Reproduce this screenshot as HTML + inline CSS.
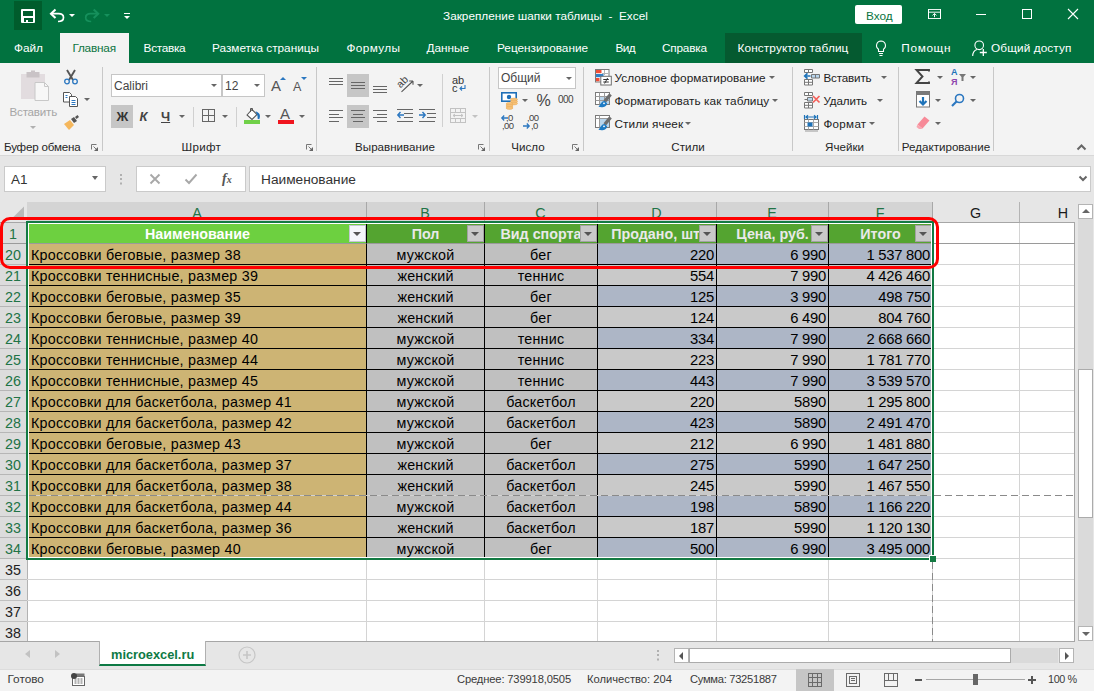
<!DOCTYPE html>
<html lang="ru"><head><meta charset="utf-8"><title>Excel</title><style>
*{box-sizing:border-box;margin:0;padding:0}
html,body{width:1094px;height:691px;overflow:hidden;background:#e6e6e6}
body{font-family:"Liberation Sans",sans-serif;font-size:11.6px;color:#262626;position:relative}
.a{position:absolute}
.t{position:absolute;white-space:nowrap;line-height:14px}
.w{color:#fff}
svg{position:absolute;overflow:visible}
#title{left:0;top:0;width:1094px;height:32px;background:#01723f}
#tabs{left:0;top:32px;width:1094px;height:31px;background:#01723f}
#ribbon{left:0;top:63px;width:1094px;height:93px;background:#f3f3f3;border-bottom:1px solid #d8d8d8}
.sep{position:absolute;width:1px;background:#c8c8c8;top:67px;height:84px}
.gl{position:absolute;white-space:nowrap;line-height:14px;top:140px;color:#262626;text-align:center}
.dd{position:absolute;width:0;height:0;border-left:3px solid transparent;border-right:3px solid transparent;border-top:3px solid #666}
</style></head><body>
<div id="title" class="a"><div class="a" style="left:14px;top:1px;width:28px;height:29px;background:#005c2c"></div><div class="a" style="left:21px;top:9px;width:14px;height:14px;background:#fff;border-radius:1px"></div><div class="a" style="left:23px;top:11px;width:10px;height:4.500px;background:#005c2c"></div><div class="a" style="left:23.500px;top:17.500px;width:9px;height:4px;background:#005c2c"></div><div class="a" style="left:26px;top:20px;width:2px;height:1.500px;background:#fff"></div><svg style="left:49px;top:8px" width="16" height="16" viewBox="0 0 16 16" fill="none" stroke="#fff" stroke-width="1.700"><path d="M6.500 1.500L2 5.700l4.500 4.300" stroke-width="2.100"/><path d="M2 5.700h7.500c3.500 0 5 1.800 5 3.800 0 2.500-2 4-5.500 4"/></svg><div class="dd" style="left:69px;top:14px;border-top-color:#fff"></div><svg style="left:85px;top:8px" width="16" height="16" viewBox="0 0 16 16" fill="none" stroke="#16905c" stroke-width="1.700"><path d="M8.700 1.500l4.500 4.200-4.500 4.300" stroke-width="2.100"/><path d="M13.200 5.700H5.700c-3.500 0-5 1.800-5 3.800 0 2.500 2 4 5.500 4"/></svg><div class="dd" style="left:104px;top:14px;border-top-color:#16905c"></div><div class="a" style="left:123.500px;top:13px;width:6px;height:1px;background:#fff"></div><div class="dd" style="left:123.500px;top:15.500px;border-top-color:#fff"></div><div class="t w" style="left:443px;top:9px;font-size:11.8px">Закрепление шапки таблицы&nbsp; -&nbsp; Excel</div><div class="a" style="left:855px;top:5px;width:47px;height:19px;background:#fff;border-radius:2px"></div><div class="t" style="left:866px;top:8.500px;color:#0b7541;font-size:11.8px">Вход</div><svg style="left:928px;top:9px" width="13" height="10" viewBox="0 0 13 11" preserveAspectRatio="none" fill="none" stroke="#fff" stroke-width="1"><rect x="0.5" y="0.5" width="12" height="10"/><path d="M0.5 3.5h12"/><path d="M6.500 9V5M4.500 7l2-2 2 2"/></svg><div class="a" style="left:976px;top:14px;width:10px;height:1px;background:#fff"></div><div class="a" style="left:1022px;top:9px;width:10px;height:10px;border:1px solid #fff"></div><svg style="left:1068px;top:9px" width="10" height="10" viewBox="0 0 10 10" stroke="#fff" stroke-width="1.1"><path d="M0 0l10 10M10 0L0 10"/></svg></div>
<div id="tabs" class="a"><div class="a" style="left:60px;top:1px;width:69px;height:30px;background:#f3f3f3"></div><div class="a" style="left:725px;top:1px;width:137px;height:30px;background:#055a30"></div><div class="t" style="left:14px;top:8.600px;color:#fff;font-size:11.8px">Файл</div><div class="t" style="left:72.4px;top:8.600px;color:#0b7541;letter-spacing:-0.2px;font-size:11.8px">Главная</div><div class="t" style="left:143.6px;top:8.600px;color:#fff;letter-spacing:-0.3px;font-size:11.8px">Вставка</div><div class="t" style="left:212px;top:8.600px;color:#fff;font-size:11.8px">Разметка страницы</div><div class="t" style="left:346.5px;top:8.600px;color:#fff;letter-spacing:0.35px;font-size:11.8px">Формулы</div><div class="t" style="left:426.5px;top:8.600px;color:#fff;font-size:11.8px">Данные</div><div class="t" style="left:497px;top:8.600px;color:#fff;font-size:11.8px">Рецензирование</div><div class="t" style="left:615.4px;top:8.600px;color:#fff;letter-spacing:-0.5px;font-size:11.8px">Вид</div><div class="t" style="left:662px;top:8.600px;color:#fff;letter-spacing:-0.2px;font-size:11.8px">Справка</div><div class="t" style="left:737.5px;top:8.600px;color:#fff;letter-spacing:0.12px;font-size:11.8px">Конструктор таблиц</div><div class="t" style="left:901.3px;top:8.600px;color:#fff;letter-spacing:0.65px;font-size:11.8px">Помощн</div><div class="t" style="left:991px;top:8.600px;color:#fff;letter-spacing:0.1px;font-size:11.8px">Общий доступ</div><svg style="left:875px;top:8px" width="12" height="16" viewBox="0 0 12 16" fill="none" stroke="#fff" stroke-width="1.1"><path d="M6 1a4.500 4.500 0 0 0-2.500 8.200V11.500h5V9.200A4.500 4.500 0 0 0 6 1z"/><path d="M4 13.500h4M4.500 15.500h3"/></svg><svg style="left:971px;top:8px" width="17" height="17" viewBox="0 0 17 17" fill="none" stroke="#fff" stroke-width="1.100"><circle cx="8.200" cy="5.300" r="4.300"/><path d="M1.700 16c0-3.500 1.800-5.800 4.300-6.600"/><path d="M12.300 9v7M8.800 12.500h7" stroke-width="1.300"/></svg></div>
<div id="ribbon" class="a"></div>
<div class="sep" style="left:102px"></div><div class="sep" style="left:316px"></div><div class="sep" style="left:489px"></div><div class="sep" style="left:583px"></div><div class="sep" style="left:792px"></div><div class="sep" style="left:898px"></div><div class="sep" style="left:993px"></div><svg style="left:20px;top:70px" width="30" height="32" viewBox="0 0 30 32"><rect x="1" y="4" width="24" height="25" fill="#e2dcdf"/><rect x="6.500" y="2" width="13" height="5.500" fill="#c9c3c6"/><rect x="11" y="0.500" width="4" height="3" fill="#c9c3c6"/><path d="M15 12.500h9.500l4 4V30.500H15z" fill="#f7f7f7" stroke="#c8c8c8"/><path d="M24.500 12.500v4h4" fill="none" stroke="#c8c8c8"/></svg><div class="t" style="left:9.5px;top:105px;color:#a6a6a6;letter-spacing:-0.2px">Вставить</div><div class="dd" style="left:30px;top:125.5px;border-top-color:#b0b0b0"></div><svg style="left:63px;top:68px" width="16" height="17" viewBox="0 0 16 17" fill="none"><path d="M4 2l6 10M12 2L6 12" stroke="#555" stroke-width="1.900"/><circle cx="4" cy="13.500" r="2.300" stroke="#2b77c0" stroke-width="1.300"/><circle cx="12" cy="13.500" r="2.300" stroke="#2b77c0" stroke-width="1.300"/></svg><svg style="left:63px;top:92px" width="16" height="15" viewBox="0 0 16 15" fill="#fff" stroke="#555" stroke-width="1"><path d="M0.500 0.500h6l2 2v7.500h-8z"/><path d="M6.500 4.500h6l2 2v8h-8z"/><path d="M8.500 8.500h4M8.500 10.500h4M8.500 12.500h4" stroke="#2b77c0"/><path d="M2.500 3.500h2M2.500 5.500h2" stroke="#2b77c0"/></svg><div class="dd" style="left:84px;top:98.3px;border-top-color:#666"></div><svg style="left:63px;top:114px" width="17" height="17" viewBox="0 0 17 17"><path d="M1 10l6-4 4 5-5 5z" fill="#f5b75c"/><path d="M8 5l3-2 3 4-3 2z" fill="#555"/><path d="M12 3l2.500-2 1.500 2-2.500 2z" fill="#555"/></svg><div class="t" style="left:4px;top:140px;color:#262626;letter-spacing:-0.2px">Буфер обмена</div><svg style="left:91px;top:144px" width="7" height="7" viewBox="0 0 7 7" fill="none" stroke="#777" stroke-width="1"><path d="M0.500 5.500V0.500H5.500"/><path d="M2.500 2.500L5.500 5.500"/><path d="M7 3v4H3z" fill="#666" stroke="none"/></svg><div class="a" style="left:111px;top:74px;width:111px;height:23px;background:#fff;border:1px solid #c6c6c6"></div><div class="a" style="left:222px;top:74px;width:43px;height:23px;background:#fff;border:1px solid #c6c6c6"></div><div class="t" style="left:114px;top:78.5px;color:#444;font-size:12px">Calibri</div><div class="t" style="left:225px;top:78.5px;color:#444;font-size:12px">12</div><div class="dd" style="left:211px;top:84.3px;border-top-color:#666"></div><div class="dd" style="left:254px;top:84.3px;border-top-color:#666"></div><div class="t" style="left:271px;top:79px;font-size:15px;color:#555">A</div><div class="dd" style="left:280px;top:77px;border-top:none;border-bottom:3px solid #2b77c0"></div><div class="t" style="left:293px;top:80px;font-size:12.500px;color:#555">A</div><div class="dd" style="left:301px;top:77px;border-top-color:#2b77c0"></div><div class="a" style="left:111px;top:105px;width:22px;height:23px;background:#c6c6c6"></div><div class="t" style="left:116.5px;top:109.5px;font-weight:bold;font-size:13px;color:#333">Ж</div><div class="t" style="left:139.5px;top:109.5px;font-style:italic;font-weight:bold;font-size:13px;color:#444">К</div><div class="t" style="left:161px;top:109.5px;font-size:13px;color:#444;text-decoration:underline;font-weight:bold">Ч</div><div class="dd" style="left:179px;top:115.3px;border-top-color:#666"></div><div class="a" style="left:193px;top:107px;width:1px;height:20px;background:#d0d0d0"></div><svg style="left:202px;top:109px" width="13" height="13" viewBox="0 0 13 13" fill="none" stroke="#666" stroke-width="1"><rect x="0.500" y="0.500" width="12" height="12"/><path d="M6.500 0.500v12M0.500 6.500h12"/></svg><div class="dd" style="left:222px;top:115.3px;border-top-color:#666"></div><div class="a" style="left:236px;top:107px;width:1px;height:20px;background:#d0d0d0"></div><svg style="left:244px;top:107px" width="17" height="18" viewBox="0 0 17 18"><path d="M3 8l5-5.500 5 5-5 5z" fill="#fff" stroke="#555" stroke-width="1.100"/><path d="M6.500 5V1.500h2V4" stroke="#555" stroke-width="1" fill="none"/><path d="M11.500 4.600c3.800 0.600 5.600 3.800 3.800 7.600l-1.700-0.500c0.300-2.600-0.500-4.800-2.100-7.100z" fill="#1e6fb8"/><rect x="0" y="13" width="16" height="4" fill="#70d048"/></svg><div class="dd" style="left:265px;top:115.3px;border-top-color:#666"></div><svg style="left:278px;top:107px" width="17" height="18" viewBox="0 0 17 18"><rect x="0" y="13" width="16" height="4" fill="#f0141e"/></svg><div class="t" style="left:280px;top:106.5px;font-size:15px;color:#555">A</div><div class="dd" style="left:299px;top:115.3px;border-top-color:#666"></div><div class="gl" style="left:180.300px;width:42px;letter-spacing:0.3px">Шрифт</div><svg style="left:306px;top:144px" width="7" height="7" viewBox="0 0 7 7" fill="none" stroke="#777" stroke-width="1"><path d="M0.500 5.500V0.500H5.500"/><path d="M2.500 2.500L5.500 5.500"/><path d="M7 3v4H3z" fill="#666" stroke="none"/></svg><div class="a" style="left:329px;top:78px;width:14px;height:1px;background:#666"></div><div class="a" style="left:329px;top:81px;width:14px;height:1px;background:#666"></div><div class="a" style="left:329px;top:84px;width:14px;height:1px;background:#666"></div><div class="a" style="left:347px;top:74px;width:22px;height:23px;background:#c6c6c6"></div><div class="a" style="left:351px;top:82px;width:14px;height:1px;background:#666"></div><div class="a" style="left:351px;top:85px;width:14px;height:1px;background:#666"></div><div class="a" style="left:351px;top:88px;width:14px;height:1px;background:#666"></div><div class="a" style="left:373px;top:86px;width:14px;height:1px;background:#666"></div><div class="a" style="left:373px;top:89px;width:14px;height:1px;background:#666"></div><div class="a" style="left:373px;top:92px;width:14px;height:1px;background:#666"></div><svg style="left:396px;top:76px" width="18" height="17" viewBox="0 0 18 17"><text x="4.500" y="12.500" font-size="10.500" fill="#444" transform="rotate(-45 4.500 12.500)" font-family="Liberation Sans">ab</text><path d="M5.500 15.800L17 5M17 5h-3.800M17 5v3.800" stroke="#555" fill="none" stroke-width="1.100"/></svg><div class="dd" style="left:416.5px;top:83.8px;border-top-color:#666"></div><div class="a" style="left:442px;top:74px;width:1px;height:53px;background:#d0d0d0"></div><div class="t" style="left:452px;top:75.500px;font-size:11px;line-height:8.500px;color:#333">ab<br>c</div><svg style="left:459px;top:85px" width="7" height="6" viewBox="0 0 7 6" fill="none" stroke="#2b77c0" stroke-width="1.100"><path d="M6 0v3.500H1M3 1.500l-2 2 2 2"/></svg><div class="a" style="left:329px;top:110px;width:14px;height:1px;background:#666"></div><div class="a" style="left:329px;top:113.67px;width:10px;height:1px;background:#666"></div><div class="a" style="left:329px;top:117.34px;width:14px;height:1px;background:#666"></div><div class="a" style="left:329px;top:121.01px;width:10px;height:1px;background:#666"></div><div class="a" style="left:347px;top:105px;width:22px;height:23px;background:#c6c6c6"></div><div class="a" style="left:351px;top:110px;width:14px;height:1px;background:#666"></div><div class="a" style="left:353px;top:113.67px;width:10px;height:1px;background:#666"></div><div class="a" style="left:351px;top:117.34px;width:14px;height:1px;background:#666"></div><div class="a" style="left:353px;top:121.01px;width:10px;height:1px;background:#666"></div><div class="a" style="left:373px;top:110px;width:14px;height:1px;background:#666"></div><div class="a" style="left:377px;top:113.67px;width:10px;height:1px;background:#666"></div><div class="a" style="left:373px;top:117.34px;width:14px;height:1px;background:#666"></div><div class="a" style="left:377px;top:121.01px;width:10px;height:1px;background:#666"></div><div class="a" style="left:397px;top:109px;width:16px;height:1px;background:#666"></div><div class="a" style="left:404px;top:113px;width:9px;height:1px;background:#666"></div><div class="a" style="left:404px;top:117px;width:9px;height:1px;background:#666"></div><div class="a" style="left:397px;top:121px;width:16px;height:1px;background:#666"></div><svg style="left:397px;top:111px" width="7" height="8" viewBox="0 0 7 8" fill="none" stroke="#2b77c0" stroke-width="1.400"><path d="M7 4H1M3.500 1L0.800 4l2.700 3"/></svg><div class="a" style="left:419px;top:109px;width:16px;height:1px;background:#666"></div><div class="a" style="left:427px;top:113px;width:9px;height:1px;background:#666"></div><div class="a" style="left:427px;top:117px;width:9px;height:1px;background:#666"></div><div class="a" style="left:419px;top:121px;width:16px;height:1px;background:#666"></div><svg style="left:419px;top:111px" width="7" height="8" viewBox="0 0 7 8" fill="none" stroke="#2b77c0" stroke-width="1.400"><path d="M0 4h6M3.500 1l2.700 3-2.700 3"/></svg><svg style="left:450px;top:108px" width="16" height="15" viewBox="0 0 16 15" fill="none" stroke="#c2c2c2" stroke-width="1"><rect x="0.500" y="0.500" width="15" height="14"/><path d="M0.500 4.500h15M0.500 10.500h15M5.500 0.500v4M10.500 0.500v4M5.500 10.500v4M10.500 10.500v4M3 7.500h10M5 6L3 7.500 5 9M11 6l2 1.500L11 9"/></svg><div class="dd" style="left:471.5px;top:115.3px;border-top-color:#c2c2c2"></div><div class="gl" style="left:355px;width:80px">Выравнивание</div><svg style="left:478px;top:144px" width="7" height="7" viewBox="0 0 7 7" fill="none" stroke="#777" stroke-width="1"><path d="M0.500 5.500V0.500H5.500"/><path d="M2.500 2.500L5.500 5.500"/><path d="M7 3v4H3z" fill="#666" stroke="none"/></svg><div class="a" style="left:498px;top:67px;width:78px;height:22px;background:#fff;border:1px solid #c6c6c6"></div><div class="t" style="left:501px;top:71px;color:#444;font-size:12px">Общий</div><div class="dd" style="left:565.5px;top:76.8px;border-top-color:#666"></div><svg style="left:501px;top:92px" width="17" height="17" viewBox="0 0 17 17"><rect x="0.800" y="0.800" width="14.400" height="8.400" fill="#fff" stroke="#1e6fb8" stroke-width="1.600"/><circle cx="8" cy="5" r="2.200" fill="#1e6fb8"/><rect x="6" y="10" width="6" height="6" fill="#f3f3f3"/><g fill="#f6c27a" stroke="#e9a64e" stroke-width="0.500"><ellipse cx="13" cy="7.500" rx="3.500" ry="1.400"/><ellipse cx="13" cy="9.500" rx="3.500" ry="1.400"/><ellipse cx="13" cy="11.500" rx="3.500" ry="1.400"/><ellipse cx="8.500" cy="12" rx="3.500" ry="1.400"/><ellipse cx="8.500" cy="14" rx="3.500" ry="1.400"/><ellipse cx="8.500" cy="16" rx="3.500" ry="1.400"/></g></svg><div class="dd" style="left:522px;top:98.8px;border-top-color:#666"></div><div class="t" style="left:536.5px;top:93.5px;font-size:16px;color:#444">%</div><div class="t" style="left:558px;top:93px;font-size:10px;color:#444;letter-spacing:-0.6px">000</div><div class="t" style="left:506px;top:114px;font-size:9.500px;line-height:8px;color:#444;letter-spacing:-0.6px">,0<br><span style="margin-left:-4px">,00</span></div><svg style="left:501px;top:115px" width="7" height="6" viewBox="0 0 7 6" fill="none" stroke="#2b77c0" stroke-width="1.300"><path d="M7 3H1M3.200 0.500L0.800 3l2.400 2.500"/></svg><div class="t" style="left:527px;top:114px;font-size:9.500px;line-height:8px;color:#444;letter-spacing:-0.6px">,00<br><span style="margin-left:4px">,0</span></div><svg style="left:523px;top:123px" width="7" height="6" viewBox="0 0 7 6" fill="none" stroke="#2b77c0" stroke-width="1.300"><path d="M0 3h6M3.800 0.500L6.200 3 3.800 5.500"/></svg><div class="gl" style="left:507px;width:42px">Число</div><svg style="left:572px;top:144px" width="7" height="7" viewBox="0 0 7 7" fill="none" stroke="#777" stroke-width="1"><path d="M0.500 5.500V0.500H5.500"/><path d="M2.500 2.500L5.500 5.500"/><path d="M7 3v4H3z" fill="#666" stroke="none"/></svg><svg style="left:595px;top:69px" width="17" height="17" viewBox="0 0 17 17"><rect x="0.500" y="0.500" width="13.500" height="12.500" fill="#fff" stroke="#7a7a7a"/><path d="M9.500 1v5M7 4.500h6.500" stroke="#b4b4b4" fill="none"/><rect x="1" y="1" width="5.500" height="3.200" fill="#f04e37"/><rect x="1" y="5" width="7.500" height="3.200" fill="#2f7fc6"/><rect x="1" y="9" width="3.500" height="3.200" fill="#f04e37"/><rect x="5.800" y="7.300" width="10.500" height="8.700" fill="#fff" stroke="#6e6e6e"/><path d="M8.300 10.500h5.500M8.300 13h5.500M12.600 9L9.600 14.500" stroke="#333" fill="none"/></svg><div class="t" style="left:614.5px;top:71px;color:#222;letter-spacing:0.05px;font-size:11.800px">Условное форматирование</div><div class="dd" style="left:768.5px;top:76.3px;border-top-color:#666"></div><svg style="left:595px;top:92px" width="17" height="17" viewBox="0 0 17 17"><rect x="0.500" y="0.500" width="14" height="12" fill="#fff" stroke="#7a7a7a"/><rect x="5" y="5" width="9" height="7" fill="#b9d5ec"/><path d="M0.500 4.500h14M0.500 8.500h14M4.500 0.500v12M9.500 0.500v12" stroke="#9a9a9a" fill="none"/><path d="M14.300 1.300L16.800 3.500 11 10.500 8.500 8.300z" fill="#6e6e6e"/><path d="M9.800 9c-3-0.500-4 3-6.300 5.800 3.500 1 8.500 0.500 8.500-3.500z" fill="#1e7bc4"/><circle cx="9" cy="11.300" r="0.900" fill="#fff"/></svg><div class="t" style="left:614.5px;top:93.5px;color:#222;letter-spacing:0.05px;font-size:11.800px">Форматировать как таблицу</div><div class="dd" style="left:772px;top:98.8px;border-top-color:#666"></div><svg style="left:595px;top:115px" width="17" height="17" viewBox="0 0 17 17"><rect x="0.500" y="0.500" width="14" height="12" fill="#fff" stroke="#7a7a7a"/><rect x="5" y="4" width="9" height="8" fill="#b9d5ec"/><path d="M0.500 3.500h14M4.500 0.500v12" stroke="#9a9a9a" fill="none"/><path d="M14.300 1.300L16.800 3.500 11 10.500 8.500 8.300z" fill="#6e6e6e"/><path d="M9.800 9c-3-0.500-4 3-6.300 5.800 3.500 1 8.500 0.500 8.500-3.500z" fill="#1e7bc4"/><circle cx="9" cy="11.300" r="0.900" fill="#fff"/></svg><div class="t" style="left:614.5px;top:116.5px;color:#222;letter-spacing:0.05px;font-size:11.800px">Стили ячеек</div><div class="dd" style="left:684.5px;top:121.8px;border-top-color:#666"></div><div class="gl" style="left:668px;width:40px">Стили</div><svg style="left:803px;top:68px" width="18" height="18" viewBox="0 0 18 18" fill="none"><path d="M1.500 1.500h8v3h-8zM5.500 1.500v3" stroke="#777" fill="#fff"/><path d="M8.500 6.500h8v3.500h-8z" stroke="#777" fill="#b9d5ec"/><path d="M12.500 6.500v3.500" stroke="#777"/><path d="M1.500 11.500h8v5.500h-8zM5.500 11.500v5.500M1.500 14.300h8" stroke="#777" fill="#fff"/><path d="M7.500 8H2M4.500 5.300L1.700 8l2.800 2.700" stroke="#1e73b9" stroke-width="1.700"/></svg><div class="t" style="left:823.5px;top:71px;color:#222;letter-spacing:-0.15px">Вставить</div><div class="dd" style="left:880.5px;top:76.3px;border-top-color:#666"></div><svg style="left:803px;top:91px" width="18" height="18" viewBox="0 0 18 18" fill="none"><path d="M1.500 1.500h8v3h-8zM5.500 1.500v3" stroke="#777" fill="#fff"/><path d="M4.500 6.500h5v3.500h-5z" stroke="#777" fill="#b9d5ec"/><path d="M1.500 8.500h3" stroke="#777"/><path d="M1.500 11.500h8v5.500h-8zM5.500 11.500v5.500M1.500 14.300h8" stroke="#777" fill="#fff"/><path d="M10 5l6.500 6.500M16.500 5L10 11.500" stroke="#f4605a" stroke-width="1.700"/></svg><div class="t" style="left:823.5px;top:93.5px;color:#222;letter-spacing:-0.1px">Удалить</div><div class="dd" style="left:876.5px;top:98.8px;border-top-color:#666"></div><svg style="left:803px;top:114px" width="18" height="18" viewBox="0 0 18 18" fill="none"><path d="M1.500 1v4M14.500 1v4M3 3h10M5 1.300L3 3l2 1.700M11 1.300l2 1.700-2 1.700" stroke="#1e73b9" stroke-width="1.200"/><rect x="1.500" y="5.500" width="14" height="10" fill="#fff" stroke="#777"/><path d="M1.500 8.500h14M1.500 12.500h14M5.500 5.500v10M10.500 5.500v10" stroke="#aaa"/><rect x="4.500" y="8.500" width="5" height="4" fill="#1e73b9"/><path d="M2 17h13" stroke="#999"/></svg><div class="t" style="left:823.5px;top:116.5px;color:#222;letter-spacing:0.3px">Формат</div><div class="dd" style="left:868.5px;top:121.8px;border-top-color:#666"></div><div class="gl" style="left:822px;width:45px">Ячейки</div><svg style="left:915px;top:69px" width="15" height="15" viewBox="0 0 15 15" fill="none" stroke="#444" stroke-width="1.900"><path d="M14 2.500V1H1.500l6 6.500-6 6.500H14V12.500"/></svg><div class="dd" style="left:936.5px;top:76.3px;border-top-color:#666"></div><div class="t" style="left:951px;top:68px;font-size:9px;line-height:9.500px;font-weight:bold;color:#1e73b9">A<br><span style="color:#8e44ad">Я</span></div><svg style="left:959px;top:74px" width="7" height="7" viewBox="0 0 7 7"><path d="M0 0h7L4.500 3v4H2.500V3z" fill="#777"/></svg><div class="dd" style="left:969.5px;top:76.3px;border-top-color:#666"></div><svg style="left:916px;top:91px" width="15" height="17" viewBox="0 0 15 17" fill="none"><rect x="0.500" y="0.500" width="13" height="15.500" fill="#fff" stroke="#777"/><rect x="0.500" y="0.500" width="13" height="3.500" fill="#7a7a7a"/><path d="M7 6v7.500M3.500 10l3.500 3.500 3.500-3.500" stroke="#1e73b9" stroke-width="2.200"/></svg><div class="dd" style="left:934.6px;top:98.8px;border-top-color:#666"></div><svg style="left:951px;top:93px" width="14" height="14" viewBox="0 0 14 14" fill="none" stroke="#2b77c0"><circle cx="8.500" cy="5.500" r="4" stroke-width="1.600"/><path d="M5.500 8.500L1 13" stroke-width="2.200"/></svg><div class="dd" style="left:969.5px;top:98.8px;border-top-color:#666"></div><svg style="left:916px;top:116px" width="14" height="13" viewBox="0 0 14 13"><path d="M8.500 0.500l5 4-7 8-5-4z" fill="#f78a98"/><path d="M1.500 8.500l5 4-1.500 0.500H3L0.500 11z" fill="#f9a5b0"/></svg><div class="dd" style="left:934.6px;top:121.8px;border-top-color:#666"></div><div class="gl" style="left:900px;width:92px">Редактирование</div><svg style="left:1077px;top:144px" width="9" height="6" viewBox="0 0 9 6" fill="none" stroke="#666" stroke-width="2"><path d="M0.500 5.500l4-4 4 4"/></svg>
<div class="a" style="left:4px;top:166px;width:102px;height:26px;background:#fff;border:1px solid #cacaca"></div><div class="t" style="left:11px;top:172px;font-size:13.500px;color:#333;line-height:15px">A1</div><div class="dd" style="left:91.500px;top:175.500px;border-width:4px 3.500px 0 3.500px;border-top-color:#666"></div><div class="a" style="left:120px;top:174px;width:2px;height:2px;background:#b0b0b0;box-shadow:0 4px 0 #b0b0b0,0 8.500px 0 #b0b0b0"></div><div class="a" style="left:136px;top:166px;width:110px;height:26px;background:#fff;border:1px solid #cacaca"></div><svg style="left:150px;top:174px" width="10" height="10" viewBox="0 0 10 10" fill="none" stroke="#a8a8a8" stroke-width="1.900"><path d="M0.500 0.500l9 9M9.500 0.500l-9 9"/></svg><svg style="left:185px;top:174px" width="12" height="10" viewBox="0 0 12 10" fill="none" stroke="#a8a8a8" stroke-width="1.900"><path d="M0.500 5.500l3.500 3.500 7.500-8.500"/></svg><div class="t" style="left:222px;top:171px;font-family:'Liberation Serif',serif;font-style:italic;font-weight:bold;font-size:14px;color:#555;line-height:16px">f<span style="font-size:10px">x</span></div><div class="a" style="left:249px;top:166px;width:842px;height:26px;background:#fff;border:1px solid #cacaca"></div><div class="t" style="left:261px;top:172px;font-size:13.700px;color:#333;line-height:15px">Наименование</div><svg style="left:1079px;top:176px" width="8" height="5" viewBox="0 0 8 5" fill="none" stroke="#666" stroke-width="2"><path d="M0.500 0.500l3.500 3.500 3.500-3.500"/></svg><div class="a" style="left:0;top:202px;width:1075px;height:440px;background:#fff;overflow:hidden"><div class="a" style="left:0;top:0;width:1075px;height:20px;background:#e6e6e6"></div><div class="a" style="left:27px;top:0;width:906px;height:20px;background:#d4d4d4"></div><svg style="left:0;top:0" width="28" height="20" viewBox="0 0 28 20"><path d="M24 4.400V16H12.400z" fill="#b9b9b9"/></svg><div class="a" style="left:28px;top:0;width:339px;height:20px;text-align:center;font-size:14.300px;line-height:23px;color:#217346;border-right:1px solid #a8a8a8">A</div><div class="a" style="left:366px;top:0;width:119px;height:20px;text-align:center;font-size:14.300px;line-height:23px;color:#217346;border-right:1px solid #a8a8a8">B</div><div class="a" style="left:484px;top:0;width:114px;height:20px;text-align:center;font-size:14.300px;line-height:23px;color:#217346;border-right:1px solid #a8a8a8">C</div><div class="a" style="left:597px;top:0;width:120px;height:20px;text-align:center;font-size:14.300px;line-height:23px;color:#217346;border-right:1px solid #a8a8a8">D</div><div class="a" style="left:716px;top:0;width:113px;height:20px;text-align:center;font-size:14.300px;line-height:23px;color:#217346;border-right:1px solid #a8a8a8">E</div><div class="a" style="left:828px;top:0;width:105px;height:20px;text-align:center;font-size:14.300px;line-height:23px;color:#217346;border-right:1px solid #a8a8a8">F</div><div class="a" style="left:932px;top:0;width:88px;height:20px;text-align:center;font-size:14.300px;line-height:23px;color:#1a1a1a;border-right:1px solid #b4b4b4">G</div><div class="a" style="left:1019px;top:0;width:89px;height:20px;text-align:center;font-size:14.300px;line-height:23px;color:#1a1a1a;border-right:1px solid transparent">H</div><div class="a" style="left:0;top:20px;width:1075px;height:1px;background:#a6a6a6"></div><div class="a" style="left:0;top:21px;width:28px;height:21px;background:#dcdcdc;text-align:center;padding-right:1px;font-size:14.300px;line-height:22px;color:#217346;border-bottom:1px solid #b6b6b6;border-right:1px solid #b2b2b2">1</div><div class="a" style="left:0;top:42px;width:28px;height:21px;background:#dcdcdc;text-align:center;padding-right:1px;font-size:14.300px;line-height:22px;color:#217346;border-bottom:1px solid #b6b6b6;border-right:1px solid #b2b2b2">20</div><div class="a" style="left:0;top:63px;width:28px;height:21px;background:#dcdcdc;text-align:center;padding-right:1px;font-size:14.300px;line-height:22px;color:#217346;border-bottom:1px solid #b6b6b6;border-right:1px solid #b2b2b2">21</div><div class="a" style="left:0;top:84px;width:28px;height:21px;background:#dcdcdc;text-align:center;padding-right:1px;font-size:14.300px;line-height:22px;color:#217346;border-bottom:1px solid #b6b6b6;border-right:1px solid #b2b2b2">22</div><div class="a" style="left:0;top:105px;width:28px;height:21px;background:#dcdcdc;text-align:center;padding-right:1px;font-size:14.300px;line-height:22px;color:#217346;border-bottom:1px solid #b6b6b6;border-right:1px solid #b2b2b2">23</div><div class="a" style="left:0;top:126px;width:28px;height:21px;background:#dcdcdc;text-align:center;padding-right:1px;font-size:14.300px;line-height:22px;color:#217346;border-bottom:1px solid #b6b6b6;border-right:1px solid #b2b2b2">24</div><div class="a" style="left:0;top:147px;width:28px;height:21px;background:#dcdcdc;text-align:center;padding-right:1px;font-size:14.300px;line-height:22px;color:#217346;border-bottom:1px solid #b6b6b6;border-right:1px solid #b2b2b2">25</div><div class="a" style="left:0;top:168px;width:28px;height:21px;background:#dcdcdc;text-align:center;padding-right:1px;font-size:14.300px;line-height:22px;color:#217346;border-bottom:1px solid #b6b6b6;border-right:1px solid #b2b2b2">26</div><div class="a" style="left:0;top:189px;width:28px;height:21px;background:#dcdcdc;text-align:center;padding-right:1px;font-size:14.300px;line-height:22px;color:#217346;border-bottom:1px solid #b6b6b6;border-right:1px solid #b2b2b2">27</div><div class="a" style="left:0;top:210px;width:28px;height:21px;background:#dcdcdc;text-align:center;padding-right:1px;font-size:14.300px;line-height:22px;color:#217346;border-bottom:1px solid #b6b6b6;border-right:1px solid #b2b2b2">28</div><div class="a" style="left:0;top:231px;width:28px;height:21px;background:#dcdcdc;text-align:center;padding-right:1px;font-size:14.300px;line-height:22px;color:#217346;border-bottom:1px solid #b6b6b6;border-right:1px solid #b2b2b2">29</div><div class="a" style="left:0;top:252px;width:28px;height:21px;background:#dcdcdc;text-align:center;padding-right:1px;font-size:14.300px;line-height:22px;color:#217346;border-bottom:1px solid #b6b6b6;border-right:1px solid #b2b2b2">30</div><div class="a" style="left:0;top:273px;width:28px;height:21px;background:#dcdcdc;text-align:center;padding-right:1px;font-size:14.300px;line-height:22px;color:#217346;border-bottom:1px solid #b6b6b6;border-right:1px solid #b2b2b2">31</div><div class="a" style="left:0;top:294px;width:28px;height:21px;background:#dcdcdc;text-align:center;padding-right:1px;font-size:14.300px;line-height:22px;color:#217346;border-bottom:1px solid #b6b6b6;border-right:1px solid #b2b2b2">32</div><div class="a" style="left:0;top:315px;width:28px;height:21px;background:#dcdcdc;text-align:center;padding-right:1px;font-size:14.300px;line-height:22px;color:#217346;border-bottom:1px solid #b6b6b6;border-right:1px solid #b2b2b2">33</div><div class="a" style="left:0;top:336px;width:28px;height:21px;background:#dcdcdc;text-align:center;padding-right:1px;font-size:14.300px;line-height:22px;color:#217346;border-bottom:1px solid #b6b6b6;border-right:1px solid #b2b2b2">34</div><div class="a" style="left:0;top:357px;width:28px;height:21px;background:#e6e6e6;text-align:center;padding-right:1px;font-size:14.300px;line-height:22px;color:#222;border-bottom:1px solid #c0c0c0;border-right:1px solid #b2b2b2">35</div><div class="a" style="left:0;top:378px;width:28px;height:21px;background:#e6e6e6;text-align:center;padding-right:1px;font-size:14.300px;line-height:22px;color:#222;border-bottom:1px solid #c0c0c0;border-right:1px solid #b2b2b2">36</div><div class="a" style="left:0;top:399px;width:28px;height:21px;background:#e6e6e6;text-align:center;padding-right:1px;font-size:14.300px;line-height:22px;color:#222;border-bottom:1px solid #c0c0c0;border-right:1px solid #b2b2b2">37</div><div class="a" style="left:0;top:420px;width:28px;height:21px;background:#e6e6e6;text-align:center;padding-right:1px;font-size:14.300px;line-height:22px;color:#222;border-bottom:1px solid #c0c0c0;border-right:1px solid #b2b2b2">38</div><div class="a" style="left:27px;top:41px;width:1048px;height:1px;background:#d4d4d4"></div><div class="a" style="left:27px;top:62px;width:1048px;height:1px;background:#d4d4d4"></div><div class="a" style="left:27px;top:83px;width:1048px;height:1px;background:#d4d4d4"></div><div class="a" style="left:27px;top:104px;width:1048px;height:1px;background:#d4d4d4"></div><div class="a" style="left:27px;top:125px;width:1048px;height:1px;background:#d4d4d4"></div><div class="a" style="left:27px;top:146px;width:1048px;height:1px;background:#d4d4d4"></div><div class="a" style="left:27px;top:167px;width:1048px;height:1px;background:#d4d4d4"></div><div class="a" style="left:27px;top:188px;width:1048px;height:1px;background:#d4d4d4"></div><div class="a" style="left:27px;top:209px;width:1048px;height:1px;background:#d4d4d4"></div><div class="a" style="left:27px;top:230px;width:1048px;height:1px;background:#d4d4d4"></div><div class="a" style="left:27px;top:251px;width:1048px;height:1px;background:#d4d4d4"></div><div class="a" style="left:27px;top:272px;width:1048px;height:1px;background:#d4d4d4"></div><div class="a" style="left:27px;top:293px;width:1048px;height:1px;background:#d4d4d4"></div><div class="a" style="left:27px;top:314px;width:1048px;height:1px;background:#d4d4d4"></div><div class="a" style="left:27px;top:335px;width:1048px;height:1px;background:#d4d4d4"></div><div class="a" style="left:27px;top:356px;width:1048px;height:1px;background:#d4d4d4"></div><div class="a" style="left:27px;top:377px;width:1048px;height:1px;background:#d4d4d4"></div><div class="a" style="left:27px;top:398px;width:1048px;height:1px;background:#d4d4d4"></div><div class="a" style="left:27px;top:419px;width:1048px;height:1px;background:#d4d4d4"></div><div class="a" style="left:27px;top:440px;width:1048px;height:1px;background:#d4d4d4"></div><div class="a" style="left:366px;top:21px;width:1px;height:420px;background:#d4d4d4"></div><div class="a" style="left:484px;top:21px;width:1px;height:420px;background:#d4d4d4"></div><div class="a" style="left:597px;top:21px;width:1px;height:420px;background:#d4d4d4"></div><div class="a" style="left:716px;top:21px;width:1px;height:420px;background:#d4d4d4"></div><div class="a" style="left:828px;top:21px;width:1px;height:420px;background:#d4d4d4"></div><div class="a" style="left:932px;top:21px;width:1px;height:420px;background:#d4d4d4"></div><div class="a" style="left:1019px;top:21px;width:1px;height:420px;background:#d4d4d4"></div><div class="a" style="left:1074px;top:20px;width:1px;height:420px;background:#a6a6a6"></div><div class="a" style="left:0;top:439px;width:1075px;height:1px;background:#a6a6a6"></div><div class="a" style="left:0;top:41px;width:1075px;height:1px;background:#9a9a9a"></div><div class="a" style="left:29px;top:21px;width:338px;height:21px;background:#6dd040;border-right:1px solid #000;border-bottom:1px solid #9a9a9a;color:#fff;font-weight:bold;font-size:14.300px;line-height:23px;text-align:center;white-space:nowrap;overflow:hidden">Наименование</div><div class="a" style="left:349px;top:23px;width:17px;height:17px;background:#f4f6fa;border:1px solid #c4c6d4"></div><div class="dd" style="left:353px;top:30px;border-width:4px 4px 0 4px;border-top-color:#555"></div><div class="a" style="left:367px;top:21px;width:118px;height:21px;background:#54a430;border-right:1px solid #000;border-bottom:1px solid #9a9a9a;color:#e9e9e9;font-weight:bold;font-size:14.300px;line-height:23px;text-align:center;white-space:nowrap;overflow:hidden">Пол</div><div class="a" style="left:467px;top:23px;width:17px;height:17px;background:#c9c9c9;border:1px solid #a2a2a2"></div><div class="dd" style="left:471px;top:30px;border-width:4px 4px 0 4px;border-top-color:#555"></div><div class="a" style="left:485px;top:21px;width:113px;height:21px;background:#54a430;border-right:1px solid #000;border-bottom:1px solid #9a9a9a;color:#e9e9e9;font-weight:bold;font-size:14.300px;line-height:23px;text-align:center;white-space:nowrap;overflow:hidden">Вид спорта</div><div class="a" style="left:580px;top:23px;width:17px;height:17px;background:#c9c9c9;border:1px solid #a2a2a2"></div><div class="dd" style="left:584px;top:30px;border-width:4px 4px 0 4px;border-top-color:#555"></div><div class="a" style="left:598px;top:21px;width:119px;height:21px;background:#54a430;border-right:1px solid #000;border-bottom:1px solid #9a9a9a;color:#e9e9e9;font-weight:bold;font-size:14.300px;line-height:23px;text-align:center;white-space:nowrap;overflow:hidden">Продано, шт.</div><div class="a" style="left:699px;top:23px;width:17px;height:17px;background:#c9c9c9;border:1px solid #a2a2a2"></div><div class="dd" style="left:703px;top:30px;border-width:4px 4px 0 4px;border-top-color:#555"></div><div class="a" style="left:717px;top:21px;width:112px;height:21px;background:#54a430;border-right:1px solid #000;border-bottom:1px solid #9a9a9a;color:#e9e9e9;font-weight:bold;font-size:14.300px;line-height:23px;text-align:center;white-space:nowrap;overflow:hidden">Цена, руб.</div><div class="a" style="left:811px;top:23px;width:17px;height:17px;background:#c9c9c9;border:1px solid #a2a2a2"></div><div class="dd" style="left:815px;top:30px;border-width:4px 4px 0 4px;border-top-color:#555"></div><div class="a" style="left:829px;top:21px;width:104px;height:21px;background:#54a430;border-right:1px solid #000;border-bottom:1px solid #9a9a9a;color:#e9e9e9;font-weight:bold;font-size:14.300px;line-height:23px;text-align:center;white-space:nowrap;overflow:hidden">Итого</div><div class="a" style="left:915px;top:23px;width:17px;height:17px;background:#c9c9c9;border:1px solid #a2a2a2"></div><div class="dd" style="left:919px;top:30px;border-width:4px 4px 0 4px;border-top-color:#555"></div><div class="a" style="left:29px;top:42px;width:338px;height:21px;background:#cdb474;border-right:1px solid #000;border-bottom:1px solid #000;font-size:14.300px;line-height:22px;color:#000;text-align:left;white-space:nowrap;overflow:hidden;padding-left:2px;letter-spacing:0.25px">Кроссовки беговые, размер 38</div><div class="a" style="left:367px;top:42px;width:118px;height:21px;background:#c0c0c0;border-right:1px solid #000;border-bottom:1px solid #000;font-size:14.300px;line-height:22px;color:#000;text-align:center;white-space:nowrap;overflow:hidden;letter-spacing:0.2px">мужской</div><div class="a" style="left:485px;top:42px;width:113px;height:21px;background:#c0c0c0;border-right:1px solid #000;border-bottom:1px solid #000;font-size:14.300px;line-height:22px;color:#000;text-align:center;white-space:nowrap;overflow:hidden;letter-spacing:0.2px">бег</div><div class="a" style="left:598px;top:42px;width:119px;height:21px;background:#adb6c6;border-right:1px solid #000;border-bottom:1px solid #000;font-size:14.300px;line-height:22px;color:#000;text-align:right;white-space:nowrap;overflow:hidden;padding-right:2px;font-size:14.800px;letter-spacing:-0.25px">220</div><div class="a" style="left:717px;top:42px;width:112px;height:21px;background:#adb6c6;border-right:1px solid #000;border-bottom:1px solid #000;font-size:14.300px;line-height:22px;color:#000;text-align:right;white-space:nowrap;overflow:hidden;padding-right:2px;font-size:14.800px;letter-spacing:-0.25px">6 990</div><div class="a" style="left:829px;top:42px;width:104px;height:21px;background:#adb6c6;border-right:1px solid #000;border-bottom:1px solid #000;font-size:14.300px;line-height:22px;color:#000;text-align:right;white-space:nowrap;overflow:hidden;padding-right:2px;font-size:14.800px;letter-spacing:-0.25px">1 537 800</div><div class="a" style="left:29px;top:63px;width:338px;height:21px;background:#cdb474;border-right:1px solid #000;border-bottom:1px solid #000;font-size:14.300px;line-height:22px;color:#000;text-align:left;white-space:nowrap;overflow:hidden;padding-left:2px;letter-spacing:0.25px">Кроссовки теннисные, размер 39</div><div class="a" style="left:367px;top:63px;width:118px;height:21px;background:#c0c0c0;border-right:1px solid #000;border-bottom:1px solid #000;font-size:14.300px;line-height:22px;color:#000;text-align:center;white-space:nowrap;overflow:hidden;letter-spacing:0.2px">женский</div><div class="a" style="left:485px;top:63px;width:113px;height:21px;background:#c0c0c0;border-right:1px solid #000;border-bottom:1px solid #000;font-size:14.300px;line-height:22px;color:#000;text-align:center;white-space:nowrap;overflow:hidden;letter-spacing:0.2px">теннис</div><div class="a" style="left:598px;top:63px;width:119px;height:21px;background:#c9c9c9;border-right:1px solid #000;border-bottom:1px solid #000;font-size:14.300px;line-height:22px;color:#000;text-align:right;white-space:nowrap;overflow:hidden;padding-right:2px;font-size:14.800px;letter-spacing:-0.25px">554</div><div class="a" style="left:717px;top:63px;width:112px;height:21px;background:#c9c9c9;border-right:1px solid #000;border-bottom:1px solid #000;font-size:14.300px;line-height:22px;color:#000;text-align:right;white-space:nowrap;overflow:hidden;padding-right:2px;font-size:14.800px;letter-spacing:-0.25px">7 990</div><div class="a" style="left:829px;top:63px;width:104px;height:21px;background:#c9c9c9;border-right:1px solid #000;border-bottom:1px solid #000;font-size:14.300px;line-height:22px;color:#000;text-align:right;white-space:nowrap;overflow:hidden;padding-right:2px;font-size:14.800px;letter-spacing:-0.25px">4 426 460</div><div class="a" style="left:29px;top:84px;width:338px;height:21px;background:#cdb474;border-right:1px solid #000;border-bottom:1px solid #000;font-size:14.300px;line-height:22px;color:#000;text-align:left;white-space:nowrap;overflow:hidden;padding-left:2px;letter-spacing:0.25px">Кроссовки беговые, размер 35</div><div class="a" style="left:367px;top:84px;width:118px;height:21px;background:#c0c0c0;border-right:1px solid #000;border-bottom:1px solid #000;font-size:14.300px;line-height:22px;color:#000;text-align:center;white-space:nowrap;overflow:hidden;letter-spacing:0.2px">женский</div><div class="a" style="left:485px;top:84px;width:113px;height:21px;background:#c0c0c0;border-right:1px solid #000;border-bottom:1px solid #000;font-size:14.300px;line-height:22px;color:#000;text-align:center;white-space:nowrap;overflow:hidden;letter-spacing:0.2px">бег</div><div class="a" style="left:598px;top:84px;width:119px;height:21px;background:#adb6c6;border-right:1px solid #000;border-bottom:1px solid #000;font-size:14.300px;line-height:22px;color:#000;text-align:right;white-space:nowrap;overflow:hidden;padding-right:2px;font-size:14.800px;letter-spacing:-0.25px">125</div><div class="a" style="left:717px;top:84px;width:112px;height:21px;background:#adb6c6;border-right:1px solid #000;border-bottom:1px solid #000;font-size:14.300px;line-height:22px;color:#000;text-align:right;white-space:nowrap;overflow:hidden;padding-right:2px;font-size:14.800px;letter-spacing:-0.25px">3 990</div><div class="a" style="left:829px;top:84px;width:104px;height:21px;background:#adb6c6;border-right:1px solid #000;border-bottom:1px solid #000;font-size:14.300px;line-height:22px;color:#000;text-align:right;white-space:nowrap;overflow:hidden;padding-right:2px;font-size:14.800px;letter-spacing:-0.25px">498 750</div><div class="a" style="left:29px;top:105px;width:338px;height:21px;background:#cdb474;border-right:1px solid #000;border-bottom:1px solid #000;font-size:14.300px;line-height:22px;color:#000;text-align:left;white-space:nowrap;overflow:hidden;padding-left:2px;letter-spacing:0.25px">Кроссовки беговые, размер 39</div><div class="a" style="left:367px;top:105px;width:118px;height:21px;background:#c0c0c0;border-right:1px solid #000;border-bottom:1px solid #000;font-size:14.300px;line-height:22px;color:#000;text-align:center;white-space:nowrap;overflow:hidden;letter-spacing:0.2px">женский</div><div class="a" style="left:485px;top:105px;width:113px;height:21px;background:#c0c0c0;border-right:1px solid #000;border-bottom:1px solid #000;font-size:14.300px;line-height:22px;color:#000;text-align:center;white-space:nowrap;overflow:hidden;letter-spacing:0.2px">бег</div><div class="a" style="left:598px;top:105px;width:119px;height:21px;background:#c9c9c9;border-right:1px solid #000;border-bottom:1px solid #000;font-size:14.300px;line-height:22px;color:#000;text-align:right;white-space:nowrap;overflow:hidden;padding-right:2px;font-size:14.800px;letter-spacing:-0.25px">124</div><div class="a" style="left:717px;top:105px;width:112px;height:21px;background:#c9c9c9;border-right:1px solid #000;border-bottom:1px solid #000;font-size:14.300px;line-height:22px;color:#000;text-align:right;white-space:nowrap;overflow:hidden;padding-right:2px;font-size:14.800px;letter-spacing:-0.25px">6 490</div><div class="a" style="left:829px;top:105px;width:104px;height:21px;background:#c9c9c9;border-right:1px solid #000;border-bottom:1px solid #000;font-size:14.300px;line-height:22px;color:#000;text-align:right;white-space:nowrap;overflow:hidden;padding-right:2px;font-size:14.800px;letter-spacing:-0.25px">804 760</div><div class="a" style="left:29px;top:126px;width:338px;height:21px;background:#cdb474;border-right:1px solid #000;border-bottom:1px solid #000;font-size:14.300px;line-height:22px;color:#000;text-align:left;white-space:nowrap;overflow:hidden;padding-left:2px;letter-spacing:0.25px">Кроссовки теннисные, размер 40</div><div class="a" style="left:367px;top:126px;width:118px;height:21px;background:#c0c0c0;border-right:1px solid #000;border-bottom:1px solid #000;font-size:14.300px;line-height:22px;color:#000;text-align:center;white-space:nowrap;overflow:hidden;letter-spacing:0.2px">мужской</div><div class="a" style="left:485px;top:126px;width:113px;height:21px;background:#c0c0c0;border-right:1px solid #000;border-bottom:1px solid #000;font-size:14.300px;line-height:22px;color:#000;text-align:center;white-space:nowrap;overflow:hidden;letter-spacing:0.2px">теннис</div><div class="a" style="left:598px;top:126px;width:119px;height:21px;background:#adb6c6;border-right:1px solid #000;border-bottom:1px solid #000;font-size:14.300px;line-height:22px;color:#000;text-align:right;white-space:nowrap;overflow:hidden;padding-right:2px;font-size:14.800px;letter-spacing:-0.25px">334</div><div class="a" style="left:717px;top:126px;width:112px;height:21px;background:#adb6c6;border-right:1px solid #000;border-bottom:1px solid #000;font-size:14.300px;line-height:22px;color:#000;text-align:right;white-space:nowrap;overflow:hidden;padding-right:2px;font-size:14.800px;letter-spacing:-0.25px">7 990</div><div class="a" style="left:829px;top:126px;width:104px;height:21px;background:#adb6c6;border-right:1px solid #000;border-bottom:1px solid #000;font-size:14.300px;line-height:22px;color:#000;text-align:right;white-space:nowrap;overflow:hidden;padding-right:2px;font-size:14.800px;letter-spacing:-0.25px">2 668 660</div><div class="a" style="left:29px;top:147px;width:338px;height:21px;background:#cdb474;border-right:1px solid #000;border-bottom:1px solid #000;font-size:14.300px;line-height:22px;color:#000;text-align:left;white-space:nowrap;overflow:hidden;padding-left:2px;letter-spacing:0.25px">Кроссовки теннисные, размер 44</div><div class="a" style="left:367px;top:147px;width:118px;height:21px;background:#c0c0c0;border-right:1px solid #000;border-bottom:1px solid #000;font-size:14.300px;line-height:22px;color:#000;text-align:center;white-space:nowrap;overflow:hidden;letter-spacing:0.2px">мужской</div><div class="a" style="left:485px;top:147px;width:113px;height:21px;background:#c0c0c0;border-right:1px solid #000;border-bottom:1px solid #000;font-size:14.300px;line-height:22px;color:#000;text-align:center;white-space:nowrap;overflow:hidden;letter-spacing:0.2px">теннис</div><div class="a" style="left:598px;top:147px;width:119px;height:21px;background:#c9c9c9;border-right:1px solid #000;border-bottom:1px solid #000;font-size:14.300px;line-height:22px;color:#000;text-align:right;white-space:nowrap;overflow:hidden;padding-right:2px;font-size:14.800px;letter-spacing:-0.25px">223</div><div class="a" style="left:717px;top:147px;width:112px;height:21px;background:#c9c9c9;border-right:1px solid #000;border-bottom:1px solid #000;font-size:14.300px;line-height:22px;color:#000;text-align:right;white-space:nowrap;overflow:hidden;padding-right:2px;font-size:14.800px;letter-spacing:-0.25px">7 990</div><div class="a" style="left:829px;top:147px;width:104px;height:21px;background:#c9c9c9;border-right:1px solid #000;border-bottom:1px solid #000;font-size:14.300px;line-height:22px;color:#000;text-align:right;white-space:nowrap;overflow:hidden;padding-right:2px;font-size:14.800px;letter-spacing:-0.25px">1 781 770</div><div class="a" style="left:29px;top:168px;width:338px;height:21px;background:#cdb474;border-right:1px solid #000;border-bottom:1px solid #000;font-size:14.300px;line-height:22px;color:#000;text-align:left;white-space:nowrap;overflow:hidden;padding-left:2px;letter-spacing:0.25px">Кроссовки теннисные, размер 45</div><div class="a" style="left:367px;top:168px;width:118px;height:21px;background:#c0c0c0;border-right:1px solid #000;border-bottom:1px solid #000;font-size:14.300px;line-height:22px;color:#000;text-align:center;white-space:nowrap;overflow:hidden;letter-spacing:0.2px">мужской</div><div class="a" style="left:485px;top:168px;width:113px;height:21px;background:#c0c0c0;border-right:1px solid #000;border-bottom:1px solid #000;font-size:14.300px;line-height:22px;color:#000;text-align:center;white-space:nowrap;overflow:hidden;letter-spacing:0.2px">теннис</div><div class="a" style="left:598px;top:168px;width:119px;height:21px;background:#adb6c6;border-right:1px solid #000;border-bottom:1px solid #000;font-size:14.300px;line-height:22px;color:#000;text-align:right;white-space:nowrap;overflow:hidden;padding-right:2px;font-size:14.800px;letter-spacing:-0.25px">443</div><div class="a" style="left:717px;top:168px;width:112px;height:21px;background:#adb6c6;border-right:1px solid #000;border-bottom:1px solid #000;font-size:14.300px;line-height:22px;color:#000;text-align:right;white-space:nowrap;overflow:hidden;padding-right:2px;font-size:14.800px;letter-spacing:-0.25px">7 990</div><div class="a" style="left:829px;top:168px;width:104px;height:21px;background:#adb6c6;border-right:1px solid #000;border-bottom:1px solid #000;font-size:14.300px;line-height:22px;color:#000;text-align:right;white-space:nowrap;overflow:hidden;padding-right:2px;font-size:14.800px;letter-spacing:-0.25px">3 539 570</div><div class="a" style="left:29px;top:189px;width:338px;height:21px;background:#cdb474;border-right:1px solid #000;border-bottom:1px solid #000;font-size:14.300px;line-height:22px;color:#000;text-align:left;white-space:nowrap;overflow:hidden;padding-left:2px;letter-spacing:0.25px">Кроссовки для баскетбола, размер 41</div><div class="a" style="left:367px;top:189px;width:118px;height:21px;background:#c0c0c0;border-right:1px solid #000;border-bottom:1px solid #000;font-size:14.300px;line-height:22px;color:#000;text-align:center;white-space:nowrap;overflow:hidden;letter-spacing:0.2px">мужской</div><div class="a" style="left:485px;top:189px;width:113px;height:21px;background:#c0c0c0;border-right:1px solid #000;border-bottom:1px solid #000;font-size:14.300px;line-height:22px;color:#000;text-align:center;white-space:nowrap;overflow:hidden;letter-spacing:0.2px">баскетбол</div><div class="a" style="left:598px;top:189px;width:119px;height:21px;background:#c9c9c9;border-right:1px solid #000;border-bottom:1px solid #000;font-size:14.300px;line-height:22px;color:#000;text-align:right;white-space:nowrap;overflow:hidden;padding-right:2px;font-size:14.800px;letter-spacing:-0.25px">220</div><div class="a" style="left:717px;top:189px;width:112px;height:21px;background:#c9c9c9;border-right:1px solid #000;border-bottom:1px solid #000;font-size:14.300px;line-height:22px;color:#000;text-align:right;white-space:nowrap;overflow:hidden;padding-right:2px;font-size:14.800px;letter-spacing:-0.25px">5890</div><div class="a" style="left:829px;top:189px;width:104px;height:21px;background:#c9c9c9;border-right:1px solid #000;border-bottom:1px solid #000;font-size:14.300px;line-height:22px;color:#000;text-align:right;white-space:nowrap;overflow:hidden;padding-right:2px;font-size:14.800px;letter-spacing:-0.25px">1 295 800</div><div class="a" style="left:29px;top:210px;width:338px;height:21px;background:#cdb474;border-right:1px solid #000;border-bottom:1px solid #000;font-size:14.300px;line-height:22px;color:#000;text-align:left;white-space:nowrap;overflow:hidden;padding-left:2px;letter-spacing:0.25px">Кроссовки для баскетбола, размер 42</div><div class="a" style="left:367px;top:210px;width:118px;height:21px;background:#c0c0c0;border-right:1px solid #000;border-bottom:1px solid #000;font-size:14.300px;line-height:22px;color:#000;text-align:center;white-space:nowrap;overflow:hidden;letter-spacing:0.2px">мужской</div><div class="a" style="left:485px;top:210px;width:113px;height:21px;background:#c0c0c0;border-right:1px solid #000;border-bottom:1px solid #000;font-size:14.300px;line-height:22px;color:#000;text-align:center;white-space:nowrap;overflow:hidden;letter-spacing:0.2px">баскетбол</div><div class="a" style="left:598px;top:210px;width:119px;height:21px;background:#adb6c6;border-right:1px solid #000;border-bottom:1px solid #000;font-size:14.300px;line-height:22px;color:#000;text-align:right;white-space:nowrap;overflow:hidden;padding-right:2px;font-size:14.800px;letter-spacing:-0.25px">423</div><div class="a" style="left:717px;top:210px;width:112px;height:21px;background:#adb6c6;border-right:1px solid #000;border-bottom:1px solid #000;font-size:14.300px;line-height:22px;color:#000;text-align:right;white-space:nowrap;overflow:hidden;padding-right:2px;font-size:14.800px;letter-spacing:-0.25px">5890</div><div class="a" style="left:829px;top:210px;width:104px;height:21px;background:#adb6c6;border-right:1px solid #000;border-bottom:1px solid #000;font-size:14.300px;line-height:22px;color:#000;text-align:right;white-space:nowrap;overflow:hidden;padding-right:2px;font-size:14.800px;letter-spacing:-0.25px">2 491 470</div><div class="a" style="left:29px;top:231px;width:338px;height:21px;background:#cdb474;border-right:1px solid #000;border-bottom:1px solid #000;font-size:14.300px;line-height:22px;color:#000;text-align:left;white-space:nowrap;overflow:hidden;padding-left:2px;letter-spacing:0.25px">Кроссовки беговые, размер 43</div><div class="a" style="left:367px;top:231px;width:118px;height:21px;background:#c0c0c0;border-right:1px solid #000;border-bottom:1px solid #000;font-size:14.300px;line-height:22px;color:#000;text-align:center;white-space:nowrap;overflow:hidden;letter-spacing:0.2px">мужской</div><div class="a" style="left:485px;top:231px;width:113px;height:21px;background:#c0c0c0;border-right:1px solid #000;border-bottom:1px solid #000;font-size:14.300px;line-height:22px;color:#000;text-align:center;white-space:nowrap;overflow:hidden;letter-spacing:0.2px">бег</div><div class="a" style="left:598px;top:231px;width:119px;height:21px;background:#c9c9c9;border-right:1px solid #000;border-bottom:1px solid #000;font-size:14.300px;line-height:22px;color:#000;text-align:right;white-space:nowrap;overflow:hidden;padding-right:2px;font-size:14.800px;letter-spacing:-0.25px">212</div><div class="a" style="left:717px;top:231px;width:112px;height:21px;background:#c9c9c9;border-right:1px solid #000;border-bottom:1px solid #000;font-size:14.300px;line-height:22px;color:#000;text-align:right;white-space:nowrap;overflow:hidden;padding-right:2px;font-size:14.800px;letter-spacing:-0.25px">6 990</div><div class="a" style="left:829px;top:231px;width:104px;height:21px;background:#c9c9c9;border-right:1px solid #000;border-bottom:1px solid #000;font-size:14.300px;line-height:22px;color:#000;text-align:right;white-space:nowrap;overflow:hidden;padding-right:2px;font-size:14.800px;letter-spacing:-0.25px">1 481 880</div><div class="a" style="left:29px;top:252px;width:338px;height:21px;background:#cdb474;border-right:1px solid #000;border-bottom:1px solid #000;font-size:14.300px;line-height:22px;color:#000;text-align:left;white-space:nowrap;overflow:hidden;padding-left:2px;letter-spacing:0.25px">Кроссовки для баскетбола, размер 37</div><div class="a" style="left:367px;top:252px;width:118px;height:21px;background:#c0c0c0;border-right:1px solid #000;border-bottom:1px solid #000;font-size:14.300px;line-height:22px;color:#000;text-align:center;white-space:nowrap;overflow:hidden;letter-spacing:0.2px">женский</div><div class="a" style="left:485px;top:252px;width:113px;height:21px;background:#c0c0c0;border-right:1px solid #000;border-bottom:1px solid #000;font-size:14.300px;line-height:22px;color:#000;text-align:center;white-space:nowrap;overflow:hidden;letter-spacing:0.2px">баскетбол</div><div class="a" style="left:598px;top:252px;width:119px;height:21px;background:#adb6c6;border-right:1px solid #000;border-bottom:1px solid #000;font-size:14.300px;line-height:22px;color:#000;text-align:right;white-space:nowrap;overflow:hidden;padding-right:2px;font-size:14.800px;letter-spacing:-0.25px">275</div><div class="a" style="left:717px;top:252px;width:112px;height:21px;background:#adb6c6;border-right:1px solid #000;border-bottom:1px solid #000;font-size:14.300px;line-height:22px;color:#000;text-align:right;white-space:nowrap;overflow:hidden;padding-right:2px;font-size:14.800px;letter-spacing:-0.25px">5990</div><div class="a" style="left:829px;top:252px;width:104px;height:21px;background:#adb6c6;border-right:1px solid #000;border-bottom:1px solid #000;font-size:14.300px;line-height:22px;color:#000;text-align:right;white-space:nowrap;overflow:hidden;padding-right:2px;font-size:14.800px;letter-spacing:-0.25px">1 647 250</div><div class="a" style="left:29px;top:273px;width:338px;height:21px;background:#cdb474;border-right:1px solid #000;border-bottom:1px solid #000;font-size:14.300px;line-height:22px;color:#000;text-align:left;white-space:nowrap;overflow:hidden;padding-left:2px;letter-spacing:0.25px">Кроссовки для баскетбола, размер 38</div><div class="a" style="left:367px;top:273px;width:118px;height:21px;background:#c0c0c0;border-right:1px solid #000;border-bottom:1px solid #000;font-size:14.300px;line-height:22px;color:#000;text-align:center;white-space:nowrap;overflow:hidden;letter-spacing:0.2px">женский</div><div class="a" style="left:485px;top:273px;width:113px;height:21px;background:#c0c0c0;border-right:1px solid #000;border-bottom:1px solid #000;font-size:14.300px;line-height:22px;color:#000;text-align:center;white-space:nowrap;overflow:hidden;letter-spacing:0.2px">баскетбол</div><div class="a" style="left:598px;top:273px;width:119px;height:21px;background:#c9c9c9;border-right:1px solid #000;border-bottom:1px solid #000;font-size:14.300px;line-height:22px;color:#000;text-align:right;white-space:nowrap;overflow:hidden;padding-right:2px;font-size:14.800px;letter-spacing:-0.25px">245</div><div class="a" style="left:717px;top:273px;width:112px;height:21px;background:#c9c9c9;border-right:1px solid #000;border-bottom:1px solid #000;font-size:14.300px;line-height:22px;color:#000;text-align:right;white-space:nowrap;overflow:hidden;padding-right:2px;font-size:14.800px;letter-spacing:-0.25px">5990</div><div class="a" style="left:829px;top:273px;width:104px;height:21px;background:#c9c9c9;border-right:1px solid #000;border-bottom:1px solid #000;font-size:14.300px;line-height:22px;color:#000;text-align:right;white-space:nowrap;overflow:hidden;padding-right:2px;font-size:14.800px;letter-spacing:-0.25px">1 467 550</div><div class="a" style="left:29px;top:294px;width:338px;height:21px;background:#cdb474;border-right:1px solid #000;border-bottom:1px solid #000;font-size:14.300px;line-height:22px;color:#000;text-align:left;white-space:nowrap;overflow:hidden;padding-left:2px;letter-spacing:0.25px">Кроссовки для баскетбола, размер 44</div><div class="a" style="left:367px;top:294px;width:118px;height:21px;background:#c0c0c0;border-right:1px solid #000;border-bottom:1px solid #000;font-size:14.300px;line-height:22px;color:#000;text-align:center;white-space:nowrap;overflow:hidden;letter-spacing:0.2px">мужской</div><div class="a" style="left:485px;top:294px;width:113px;height:21px;background:#c0c0c0;border-right:1px solid #000;border-bottom:1px solid #000;font-size:14.300px;line-height:22px;color:#000;text-align:center;white-space:nowrap;overflow:hidden;letter-spacing:0.2px">баскетбол</div><div class="a" style="left:598px;top:294px;width:119px;height:21px;background:#adb6c6;border-right:1px solid #000;border-bottom:1px solid #000;font-size:14.300px;line-height:22px;color:#000;text-align:right;white-space:nowrap;overflow:hidden;padding-right:2px;font-size:14.800px;letter-spacing:-0.25px">198</div><div class="a" style="left:717px;top:294px;width:112px;height:21px;background:#adb6c6;border-right:1px solid #000;border-bottom:1px solid #000;font-size:14.300px;line-height:22px;color:#000;text-align:right;white-space:nowrap;overflow:hidden;padding-right:2px;font-size:14.800px;letter-spacing:-0.25px">5890</div><div class="a" style="left:829px;top:294px;width:104px;height:21px;background:#adb6c6;border-right:1px solid #000;border-bottom:1px solid #000;font-size:14.300px;line-height:22px;color:#000;text-align:right;white-space:nowrap;overflow:hidden;padding-right:2px;font-size:14.800px;letter-spacing:-0.25px">1 166 220</div><div class="a" style="left:29px;top:315px;width:338px;height:21px;background:#cdb474;border-right:1px solid #000;border-bottom:1px solid #000;font-size:14.300px;line-height:22px;color:#000;text-align:left;white-space:nowrap;overflow:hidden;padding-left:2px;letter-spacing:0.25px">Кроссовки для баскетбола, размер 36</div><div class="a" style="left:367px;top:315px;width:118px;height:21px;background:#c0c0c0;border-right:1px solid #000;border-bottom:1px solid #000;font-size:14.300px;line-height:22px;color:#000;text-align:center;white-space:nowrap;overflow:hidden;letter-spacing:0.2px">женский</div><div class="a" style="left:485px;top:315px;width:113px;height:21px;background:#c0c0c0;border-right:1px solid #000;border-bottom:1px solid #000;font-size:14.300px;line-height:22px;color:#000;text-align:center;white-space:nowrap;overflow:hidden;letter-spacing:0.2px">баскетбол</div><div class="a" style="left:598px;top:315px;width:119px;height:21px;background:#c9c9c9;border-right:1px solid #000;border-bottom:1px solid #000;font-size:14.300px;line-height:22px;color:#000;text-align:right;white-space:nowrap;overflow:hidden;padding-right:2px;font-size:14.800px;letter-spacing:-0.25px">187</div><div class="a" style="left:717px;top:315px;width:112px;height:21px;background:#c9c9c9;border-right:1px solid #000;border-bottom:1px solid #000;font-size:14.300px;line-height:22px;color:#000;text-align:right;white-space:nowrap;overflow:hidden;padding-right:2px;font-size:14.800px;letter-spacing:-0.25px">5990</div><div class="a" style="left:829px;top:315px;width:104px;height:21px;background:#c9c9c9;border-right:1px solid #000;border-bottom:1px solid #000;font-size:14.300px;line-height:22px;color:#000;text-align:right;white-space:nowrap;overflow:hidden;padding-right:2px;font-size:14.800px;letter-spacing:-0.25px">1 120 130</div><div class="a" style="left:29px;top:336px;width:338px;height:21px;background:#cdb474;border-right:1px solid #000;border-bottom:1px solid #000;font-size:14.300px;line-height:22px;color:#000;text-align:left;white-space:nowrap;overflow:hidden;padding-left:2px;letter-spacing:0.25px">Кроссовки беговые, размер 40</div><div class="a" style="left:367px;top:336px;width:118px;height:21px;background:#c0c0c0;border-right:1px solid #000;border-bottom:1px solid #000;font-size:14.300px;line-height:22px;color:#000;text-align:center;white-space:nowrap;overflow:hidden;letter-spacing:0.2px">мужской</div><div class="a" style="left:485px;top:336px;width:113px;height:21px;background:#c0c0c0;border-right:1px solid #000;border-bottom:1px solid #000;font-size:14.300px;line-height:22px;color:#000;text-align:center;white-space:nowrap;overflow:hidden;letter-spacing:0.2px">бег</div><div class="a" style="left:598px;top:336px;width:119px;height:21px;background:#adb6c6;border-right:1px solid #000;border-bottom:1px solid #000;font-size:14.300px;line-height:22px;color:#000;text-align:right;white-space:nowrap;overflow:hidden;padding-right:2px;font-size:14.800px;letter-spacing:-0.25px">500</div><div class="a" style="left:717px;top:336px;width:112px;height:21px;background:#adb6c6;border-right:1px solid #000;border-bottom:1px solid #000;font-size:14.300px;line-height:22px;color:#000;text-align:right;white-space:nowrap;overflow:hidden;padding-right:2px;font-size:14.800px;letter-spacing:-0.25px">6 990</div><div class="a" style="left:829px;top:336px;width:104px;height:21px;background:#adb6c6;border-right:1px solid #000;border-bottom:1px solid #000;font-size:14.300px;line-height:22px;color:#000;text-align:right;white-space:nowrap;overflow:hidden;padding-right:2px;font-size:14.800px;letter-spacing:-0.25px">3 495 000</div><div class="a" style="left:26px;top:19px;width:908px;height:339px;border:2px solid #137a43;box-shadow:inset 0 0 0 1px #fff"></div><div class="a" style="left:929px;top:353px;width:7px;height:7px;background:#137a43;border:1px solid #fff;border-right:none;border-bottom:none"></div><div class="a" style="left:932px;top:360px;width:1px;height:80px;background:repeating-linear-gradient(180deg,#8a8a8a 0,#8a8a8a 7px,transparent 7px,transparent 11px)"></div><div class="a" style="left:29px;top:293px;width:902px;height:1px;background:repeating-linear-gradient(90deg,#8a8a8a 0,#8a8a8a 7px,#d2d2d2 7px,#d2d2d2 11px)"></div><div class="a" style="left:934px;top:293px;width:140px;height:1px;background:repeating-linear-gradient(90deg,#8a8a8a 0,#8a8a8a 7px,#fff 7px,#fff 11px)"></div></div>
<div class="a" style="left:0px;top:217px;width:939px;height:52px;border:3px solid #ff0000;border-radius:10px"></div><div class="a" style="left:1078px;top:219px;width:15px;height:408px;background:#dadada"></div><div class="a" style="left:1078px;top:204px;width:15px;height:15px;background:#fff;border:1px solid #b4b4b4"></div><div class="dd" style="left:1081.500px;top:209px;border-width:0 4px 4px 4px;border-top:none;border-bottom:4px solid #666;border-left:4px solid transparent;border-right:4px solid transparent"></div><div class="a" style="left:1078px;top:369px;width:15px;height:149px;background:#fff;border:1px solid #ababab"></div><div class="a" style="left:1078px;top:626px;width:15px;height:15px;background:#fff;border:1px solid #b4b4b4"></div><div class="dd" style="left:1081.500px;top:632px;border-width:4px 4px 0 4px;border-top-color:#666"></div>
<div class="a" style="left:0;top:642px;width:1094px;height:27px;background:#e6e6e6"></div><div class="dd" style="left:25px;top:650px;border-width:4px 5px 4px 0;border-style:solid;border-color:transparent #c2c2c2 transparent transparent"></div><div class="dd" style="left:55px;top:650px;border-width:4px 0 4px 5px;border-style:solid;border-color:transparent transparent transparent #c2c2c2"></div><div class="a" style="left:99px;top:641px;width:107px;height:25px;background:#fff;border-left:1px solid #b0b0b0;border-right:1px solid #b0b0b0;border-bottom:2px solid #0e7a45"></div><div class="t" style="left:111px;top:647px;font-size:12.800px;font-weight:bold;color:#0e7a45;line-height:15px">microexcel.ru</div><svg style="left:238px;top:646px" width="18" height="18" viewBox="0 0 18 18" fill="none" stroke="#c6c6c6" stroke-width="1.200"><circle cx="9" cy="9" r="8"/><path d="M9 5v8M5 9h8" stroke-width="1.600"/></svg><div class="a" style="left:657px;top:650px;width:2px;height:2px;background:#b0b0b0;box-shadow:0 4px 0 #b0b0b0,0 8.500px 0 #b0b0b0"></div><div class="a" style="left:688px;top:648px;width:370px;height:15px;background:#dadada"></div><div class="a" style="left:674px;top:648px;width:15px;height:15px;background:#fff;border:1px solid #b4b4b4"></div><div class="dd" style="left:679px;top:651.500px;border-width:4px 4px 4px 0;border-style:solid;border-color:transparent #555 transparent transparent"></div><div class="a" style="left:689px;top:648px;width:322px;height:15px;background:#fff;border:1px solid #ababab"></div><div class="a" style="left:1059px;top:648px;width:15px;height:15px;background:#fff;border:1px solid #b4b4b4"></div><div class="dd" style="left:1065px;top:651.500px;border-width:4px 0 4px 4px;border-style:solid;border-color:transparent transparent transparent #555"></div><div class="a" style="left:0;top:669px;width:1094px;height:22px;background:#f3f3f3;border-top:1px solid #dcdcdc"></div><div class="t" style="left:7.5px;top:672px;color:#3a3a3a;font-size:11.800px;">Готово</div><svg style="left:71px;top:673px" width="14" height="13" viewBox="0 0 14 13"><rect x="1.500" y="3.500" width="12" height="9" fill="#fff" stroke="#666"/><path d="M3.500 6h8M3.500 8h8M3.500 10h8" stroke="#666" stroke-dasharray="2 1" fill="none"/><rect x="5" y="0.500" width="8.500" height="3" fill="#777"/><circle cx="3" cy="3" r="3" fill="#444"/></svg><div class="t" style="left:457px;top:672px;color:#3a3a3a;font-size:11.800px;font-size:11.200px;letter-spacing:-0.15px">Среднее: 739918,0505</div><div class="t" style="left:587px;top:672px;color:#3a3a3a;font-size:11.800px;font-size:11.200px">Количество: 204</div><div class="t" style="left:690px;top:672px;color:#3a3a3a;font-size:11.800px;font-size:11.200px;letter-spacing:-0.3px">Сумма: 73251887</div><div class="a" style="left:796px;top:669px;width:38px;height:22px;background:#c6c6c6"></div><svg style="left:808px;top:673px" width="14" height="14" viewBox="0 0 14 14" fill="none" stroke="#6a6a6a" stroke-width="1"><rect x="0.500" y="0.500" width="13" height="13"/><path d="M4.500 0.500v13M9.500 0.500v13M0.500 4.500h13M0.500 9.500h13"/></svg><svg style="left:846px;top:673px" width="14" height="14" viewBox="0 0 14 14" fill="none" stroke="#6a6a6a" stroke-width="1"><rect x="0.500" y="0.500" width="13" height="13"/><rect x="3.500" y="3.500" width="7" height="7"/><path d="M5 5.500h4M5 7.500h4"/></svg><svg style="left:884px;top:673px" width="14" height="14" viewBox="0 0 14 14" fill="none" stroke="#6a6a6a" stroke-width="1"><rect x="0.500" y="0.500" width="13" height="13"/><path d="M4.500 0.500v7h5v-7M0.500 7.500h13"/></svg><div class="a" style="left:915px;top:679px;width:7px;height:1.500px;background:#555"></div><div class="a" style="left:926px;top:679px;width:99px;height:1px;background:#a6a6a6"></div><div class="a" style="left:973px;top:674px;width:5px;height:11px;background:#666"></div><div class="a" style="left:1028px;top:679px;width:8px;height:1.500px;background:#555"></div><div class="a" style="left:1031.200px;top:676px;width:1.500px;height:8px;background:#555"></div><div class="t" style="left:1048px;top:672px;color:#3a3a3a;font-size:11.800px;font-size:10.800px;letter-spacing:-0.35px">100 %</div>
</body></html>
